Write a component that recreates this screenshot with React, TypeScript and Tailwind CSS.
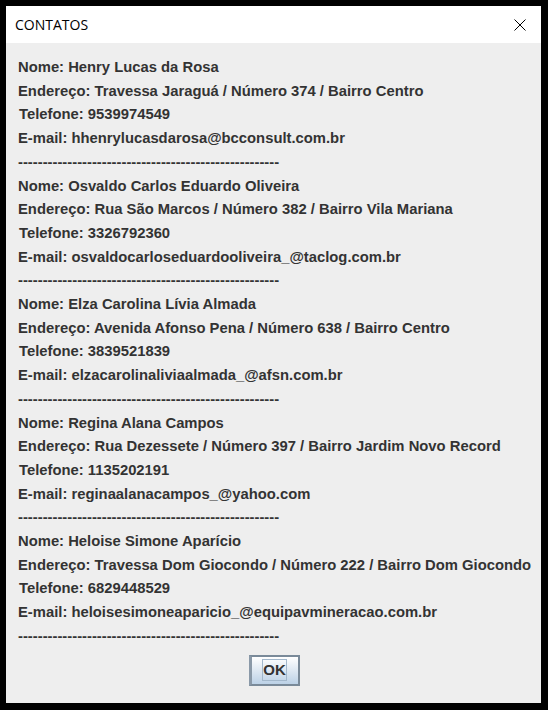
import React from 'react'

const contatos = [
  {
    nome: 'Henry Lucas da Rosa',
    endereco: 'Travessa Jaraguá / Número 374 / Bairro Centro',
    telefone: '9539974549',
    email: 'hhenrylucasdarosa@bcconsult.com.br',
  },
  {
    nome: 'Osvaldo Carlos Eduardo Oliveira',
    endereco: 'Rua São Marcos / Número 382 / Bairro Vila Mariana',
    telefone: '3326792360',
    email: 'osvaldocarloseduardooliveira_@taclog.com.br',
  },
  {
    nome: 'Elza Carolina Lívia Almada',
    endereco: 'Avenida Afonso Pena / Número 638 / Bairro Centro',
    telefone: '3839521839',
    email: 'elzacarolinaliviaalmada_@afsn.com.br',
  },
  {
    nome: 'Regina Alana Campos',
    endereco: 'Rua Dezessete / Número 397 / Bairro Jardim Novo Record',
    telefone: '1135202191',
    email: 'reginaalanacampos_@yahoo.com',
  },
  {
    nome: 'Heloise Simone Aparício',
    endereco: 'Travessa Dom Giocondo / Número 222 / Bairro Dom Giocondo',
    telefone: '6829448529',
    email: 'heloisesimoneaparicio_@equipavmineracao.com.br',
  },
]

const divisor = '-'.repeat(53)

export default function App() {
  return (
    <div className="w-[548px] h-[710px] bg-black p-[6px] pr-[7px] pb-[7px]">
      <div className="flex h-full flex-col bg-[#eeeeee]">
        {/* Barra de título */}
        <div className="flex h-[37px] items-center justify-between bg-white pl-[9px] pr-[14px]">
          <span className="font-['Open_Sans',sans-serif] text-[14px] text-black">CONTATOS</span>
          <svg width="12" height="12" viewBox="0 0 12 12" className="mr-[1px]">
            <path d="M0.5 0.5 L11.5 11.5 M11.5 0.5 L0.5 11.5" stroke="#000" strokeWidth="1" />
          </svg>
        </div>

        {/* Conteúdo */}
        <div className="flex flex-col pl-[12px] pt-[13px] font-['Liberation_Sans',Arial,sans-serif] text-[14.8px] font-bold leading-[23.7px] text-[#333333]">
          {contatos.map(c => (
            <div key={c.nome}>
              <div>Nome: {c.nome}</div>
              <div>Endereço: {c.endereco}</div>
              <div className="pl-[1px]">Telefone: {c.telefone}</div>
              <div>E-mail: {c.email}</div>
              <div>{divisor}</div>
            </div>
          ))}
        </div>

        <div className="flex justify-center pt-[6px]">
          <button className="ml-[1px] flex h-[31px] w-[51px] items-center justify-center border-2 border-l-[3px] border-[#7a8a99] border-l-[#8a99a8] bg-gradient-to-b from-white to-[#bcd1e6]">
            <span className="flex h-[22px] w-[25px] items-center justify-center border border-[#a3b8cc] font-['Liberation_Sans',Arial,sans-serif] text-[15px] font-bold text-[#333333]">
              OK
            </span>
          </button>
        </div>
      </div>
    </div>
  )
}
